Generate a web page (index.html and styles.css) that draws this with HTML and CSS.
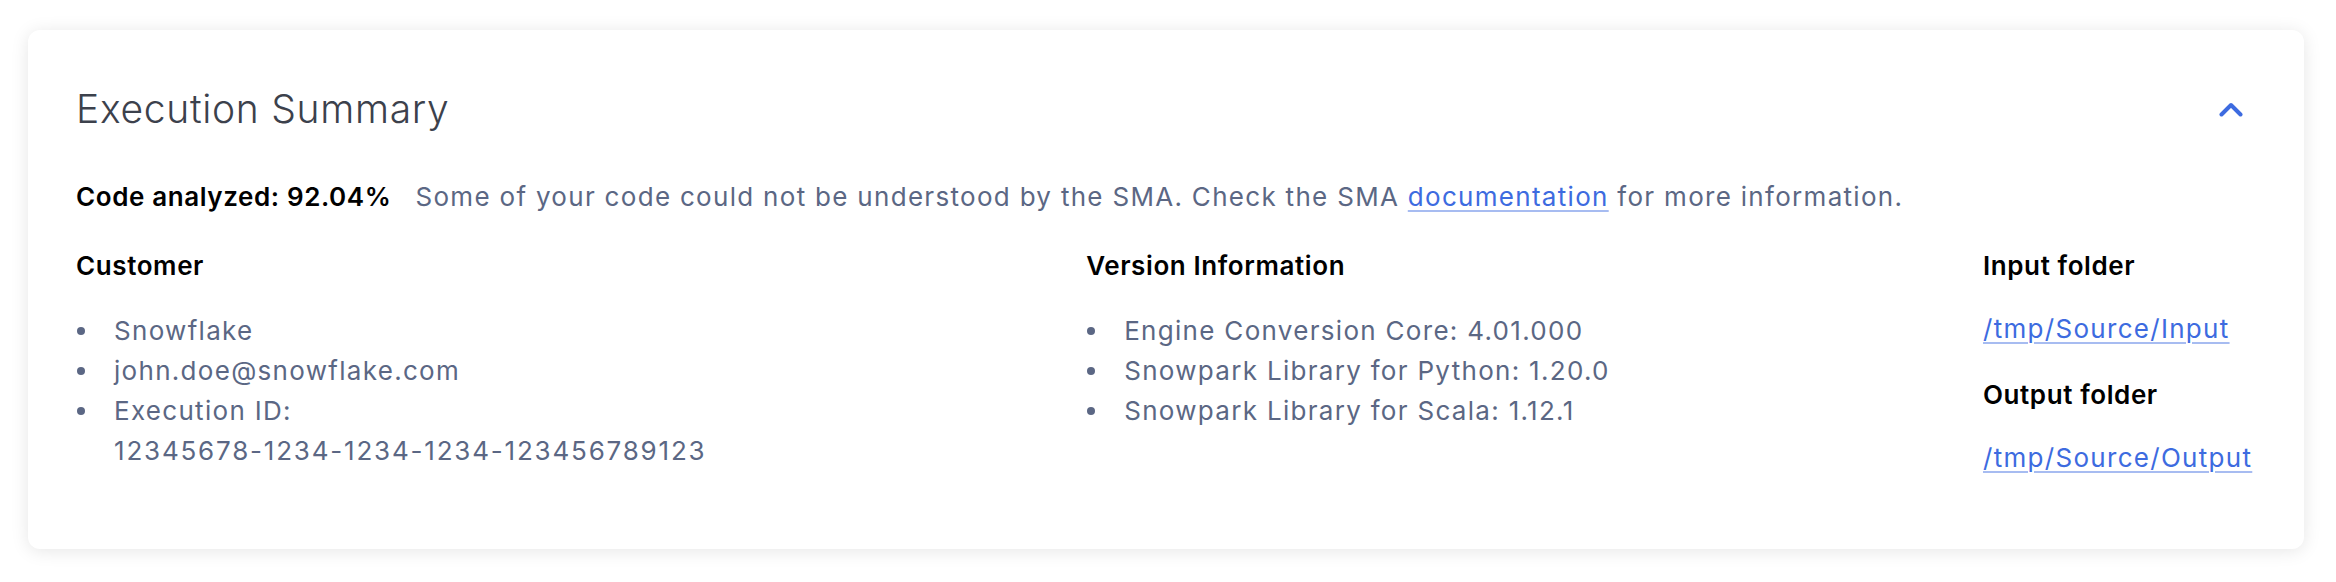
FILE: index.html
```html
<!DOCTYPE html>
<html lang="en">
<head>
<meta charset="utf-8">
<title>Execution Summary</title>
<link rel="stylesheet" href="styles.css">
</head>
<body>
<div class="page">
  <section class="card">
    <header class="card-header">
      <h2 class="title">Execution Summary</h2>
      <button class="toggle" aria-label="Collapse">
        <svg width="24" height="16" viewBox="0 0 24 16" fill="none">
          <path d="M2.5 13.5 L12 4 L21.5 13.5" stroke="#3d6be0" stroke-width="4" stroke-linecap="round" stroke-linejoin="round"/>
        </svg>
      </button>
    </header>
    <p class="analysis"><strong class="analysis-value">Code analyzed: 92.04%</strong><span class="analysis-note">Some of your code could not be understood by the SMA. Check the SMA <a class="link" href="#">documentation</a> for more information.</span></p>
    <div class="columns">
      <div class="col col-customer">
        <h3 class="col-title">Customer</h3>
        <ul class="list">
          <li>Snowflake</li>
          <li>john.doe@snowflake.com</li>
          <li>Execution ID:<br><span class="exec-id">12345678-1234-1234-1234-123456789123</span></li>
        </ul>
      </div>
      <div class="col col-version">
        <h3 class="col-title">Version Information</h3>
        <ul class="list">
          <li>Engine Conversion Core: 4.01.000</li>
          <li>Snowpark Library for Python: 1.20.0</li>
          <li>Snowpark Library for Scala: 1.12.1</li>
        </ul>
      </div>
      <div class="col col-folders">
        <h3 class="col-title">Input folder</h3>
        <p class="folder"><a class="link" href="#">/tmp/Source/Input</a></p>
        <h3 class="col-title">Output folder</h3>
        <p class="folder"><a class="link" href="#">/tmp/Source/Output</a></p>
      </div>
    </div>
  </section>
</div>
</body>
</html>
```
FILE: styles.css
```css
* { box-sizing: border-box; }
html, body { margin: 0; padding: 0; background: #ffffff; }
body {
  font-family: Inter, "Noto Sans", "Liberation Sans", sans-serif;
  font-size: 26px;
  line-height: 40px;
  letter-spacing: 1.3px;
  color: #5b6784;
}
.page {
  padding: 30px 32px 31px 28px;
}
.card {
  background: #ffffff;
  border-radius: 12px;
  box-shadow: 0 2px 18px rgba(0, 0, 0, 0.10);
  padding: 55px 48px 71px 48px;
}
.card-header {
  display: flex;
  align-items: center;
  justify-content: space-between;
  height: 48px;
}
.title {
  margin: 0;
  font-size: 39px;
  line-height: 48px;
  font-weight: 300;
  letter-spacing: 0.7px;
  color: #3c414c;
}
.toggle {
  border: 0;
  background: none;
  padding: 0;
  margin-right: 13px;
  width: 24px;
  height: 16px;
  display: flex;
}
.analysis {
  margin: 44px 0 0 0;
  display: flex;
  align-items: baseline;
}
.analysis-value {
  font-weight: 600;
  letter-spacing: 0.6px;
  color: #000000;
  margin-right: 24px;
}
.link {
  color: #3d6be0;
  text-decoration: underline;
  text-decoration-color: #a7bcf1;
  text-decoration-thickness: 2px;
  text-underline-offset: 4px;
}
.columns {
  display: flex;
  justify-content: space-between;
  margin-top: 29px;
}
.col-customer { min-width: 637px; }
.col-version { min-width: 522px; }
.col-folders { min-width: 273px; }
.exec-id { letter-spacing: 1.8px; }
.col-title {
  margin: 0;
  font-size: 26px;
  line-height: 40px;
  font-weight: 600;
  letter-spacing: 0.6px;
  color: #000000;
}
.list {
  list-style: none;
  margin: 25px 0 0 0;
  padding: 0;
}
.list li {
  position: relative;
  padding-left: 38px;
}
.list li::before {
  content: "";
  position: absolute;
  left: 1px;
  top: 16px;
  width: 8px;
  height: 8px;
  border-radius: 50%;
  background: #5b6784;
}
.folder {
  margin: 23px 0 26px 0;
}
.folder:last-child { margin-bottom: 0; }
```
